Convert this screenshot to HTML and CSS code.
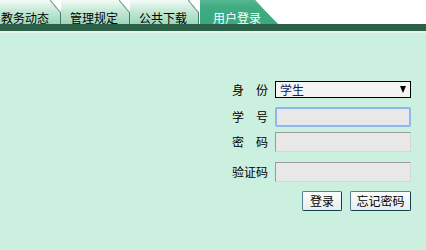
FILE: index.html
```html
<!DOCTYPE html>
<html lang="zh-CN">
<head>
    <meta charset="UTF-8">
    <meta name="viewport" content="width=device-width, initial-scale=1.0">
    <title>用户登录</title>
    <link rel="stylesheet" href="styles.css">
</head>
<body>

<!-- 顶部导航 -->
<div class="tabs">
    <a class="tab first">教务动态</a>
    <a class="tab">管理规定</a>
    <a class="tab">公共下载</a>
    <a class="tab active">用户登录</a>
</div>
<div class="tab-bar"></div>

<!-- 登录表单 -->
<div class="main">
    <form class="login-form">
        <div class="row row-select">
            <label>身　份</label>
            <div class="select-box">
                <select>
                    <option>学生</option>
                    <option>教师</option>
                </select>
            </div>
        </div>
        <div class="row row-user">
            <label>学　号</label>
            <input type="text" class="focus">
        </div>
        <div class="row row-pass">
            <label>密　码</label>
            <input type="password">
        </div>
        <div class="row row-code">
            <label>验证码</label>
            <input type="text">
        </div>
        <div class="buttons">
            <button type="button" class="btn-login">登录</button>
            <button type="button" class="btn-forget">忘记密码</button>
        </div>
    </form>
</div>

</body>
</html>
```

FILE: styles.css
```css
body {
    margin: 0;
    font-family: "Noto Sans CJK SC", "DejaVu Sans", sans-serif;
    font-size: 12px;
    background-color: #ccf0df;
    height: 250px;
    overflow: hidden;
}
.tabs {
    display: flex;
    height: 24px;
    background-color: #fff;
}
.tab {
    position: relative;
    flex: none;
    box-sizing: border-box;
    width: 69px;
    height: 24px;
    padding: 11px 0 0 9px;
    line-height: 14px;
    white-space: nowrap;
    color: #000;
    background: linear-gradient(#f5fcf8, #c9ebda 40%, #9dd6ba);
    box-shadow: inset -1px 0 #3f7f63;
}
.tab.first {
    margin-left: -8px;
}
.tab::after {
    content: "";
    position: absolute;
    top: 0;
    right: 0;
    width: 11px;
    height: 13px;
    background: linear-gradient(to bottom left, #fff 44%, #6d9a86 50%, transparent 57%);
}
.tab.active {
    width: 78px;
    margin-left: 1px;
    padding-left: 13px;
    color: #fff;
    background: linear-gradient(#56b892, #3fac82 30%, #3aa87d);
    box-shadow: none;
}
.tab.active::after {
    width: 23px;
    height: 24px;
    background: linear-gradient(to bottom left, #fff 49%, #7fbfa4 50%, transparent 53%);
}
.tab-bar {
    height: 7px;
    background-color: #2b5f48;
    border-bottom: 2px solid #e2f6ec;
}
.main {
    display: flex;
    justify-content: flex-end;
    padding: 48px 15px 0 0;
}
.login-form {
    width: 179px;
}
.row {
    display: flex;
    align-items: center;
    gap: 6px;
    height: 20px;
}
.row label {
    width: 37px;
    color: #000;
    line-height: 14px;
}
.row-select {
    height: 17px;
    margin-bottom: 9px;
}
.row-user {
    margin-bottom: 5px;
}
.row-pass {
    margin-bottom: 10px;
}
.row-code {
    margin-bottom: 9px;
}
.select-box {
    position: relative;
    width: 136px;
    height: 17px;
}
.select-box::after {
    content: "";
    position: absolute;
    right: 5px;
    top: 5px;
    border-left: 3.5px solid transparent;
    border-right: 3.5px solid transparent;
    border-top: 7px solid #000;
    pointer-events: none;
}
select {
    appearance: none;
    box-sizing: border-box;
    width: 136px;
    height: 17px;
    margin: 0;
    padding: 0 0 0 4px;
    border: 1px solid #000;
    border-radius: 0;
    background-color: #f4f4f4;
    font-family: inherit;
    font-size: 12px;
    line-height: 15px;
    color: #10245a;
}
input[type="text"], input[type="password"] {
    box-sizing: border-box;
    width: 136px;
    height: 20px;
    margin: 0;
    padding: 0 3px;
    border: 1px solid;
    border-color: #9a9a9a #d6d6d6 #d6d6d6 #9a9a9a;
    background-color: #e8e8e8;
    outline: none;
}
input.focus {
    border: 2px solid #90b6ee;
    border-radius: 2px;
}
.buttons {
    display: flex;
    justify-content: flex-end;
    gap: 8px;
}
button {
    box-sizing: border-box;
    height: 20px;
    margin: 0;
    padding: 0;
    border: 1px solid;
    border-color: #56808f #123e4e #123e4e #56808f;
    border-radius: 2px;
    background: linear-gradient(#fbfdfd, #e6eeee);
    font-family: inherit;
    font-size: 12px;
    line-height: 18px;
    color: #000;
    cursor: pointer;
}
.btn-login {
    width: 40px;
}
.btn-forget {
    width: 61px;
}
```
